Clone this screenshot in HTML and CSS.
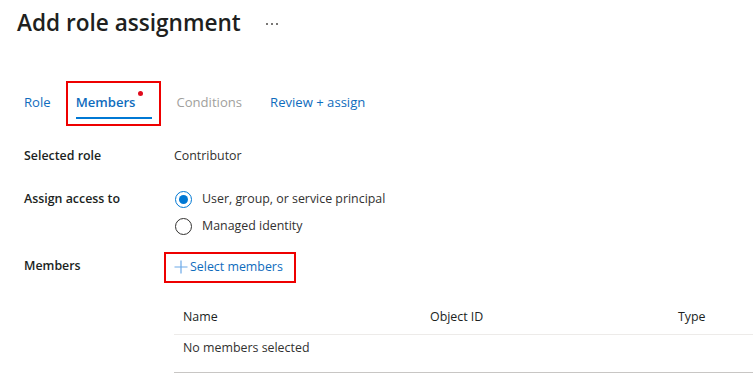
FILE: index.html
```html
<!DOCTYPE html>
<html lang="en">
<head>
  <meta charset="UTF-8">
  <meta name="viewport" content="width=device-width, initial-scale=1.0">
  <title>Add role assignment</title>
  <link rel="stylesheet" href="styles.css">
</head>
<body>
  <div class="page">
    <div class="header">
      <h1>Add role assignment</h1>
      <span class="more"><i></i><i></i><i></i></span>
    </div>

    <div class="tabs">
      <a href="#" class="tab tab-plain tab-role">Role</a>
      <div class="tab-frame">
        <a href="#" class="tab active">Members<span class="dot"></span></a>
      </div>
      <span class="tab tab-plain disabled">Conditions</span>
      <a href="#" class="tab tab-plain">Review + assign</a>
    </div>

    <div class="form">
      <div class="row">
        <div class="label">Selected role</div>
        <div class="value">Contributor</div>
      </div>

      <div class="row row-top">
        <div class="label">Assign access to</div>
        <div class="options">
          <label class="option">
            <span class="radio checked"></span>
            User, group, or service principal
          </label>
          <label class="option">
            <span class="radio"></span>
            Managed identity
          </label>
        </div>
      </div>

      <div class="row row-members">
        <div class="label">Members</div>
        <div class="select-frame">
          <a href="#" class="select-link">
            <svg width="14" height="14" viewBox="0 0 14 14">
              <path d="M7 0.5V13.5M0.5 7H13.5" stroke="#6ca9e8" stroke-width="1.2" fill="none"/>
            </svg>
            Select members
          </a>
        </div>
      </div>
    </div>

    <div class="members-table">
      <div class="table-head">
        <div class="cell">Name</div>
        <div class="cell">Object ID</div>
        <div class="cell">Type</div>
      </div>
      <div class="table-row">
        <div class="cell">No members selected</div>
      </div>
    </div>
  </div>
</body>
</html>
```

FILE: styles.css
```css
html, body {
  margin: 0;
  padding: 0;
  overflow: hidden;
}
body {
  font-family: "Open Sans", "Noto Sans", sans-serif;
  font-size: 12.4px;
  color: #323130;
  background-color: #ffffff;
}
.page {
  padding: 7px 0 0 17px;
}
.header {
  display: flex;
  align-items: center;
  gap: 25px;
}
h1 {
  margin: 0;
  font-size: 22.6px;
  line-height: 32px;
  font-weight: 600;
  color: #201f1e;
}
.more {
  display: flex;
  gap: 3px;
  margin-top: 1px;
}
.more i {
  width: 2px;
  height: 2px;
  background-color: #797775;
}

/* tabs */
.tabs {
  display: flex;
  align-items: flex-start;
  margin: 42px 0 0 7px;
  font-size: 13.1px;
}
.tab {
  display: block;
  line-height: 20px;
  padding-bottom: 5px;
  border-bottom: 2px solid transparent;
  text-decoration: none;
  color: #0f6cbd;
  white-space: nowrap;
}
.tab-plain {
  margin-top: 11px;
}
.tab-role {
  margin-right: 15px;
}
.tab-frame {
  border: 2px solid #ee0000;
  padding: 9px 7px 5px 8px;
  margin-right: 15px;
}
.tab.active {
  position: relative;
  font-weight: 600;
  color: #0f6cbd;
  padding-right: 17px;
  border-bottom-color: #0078d4;
}
.dot {
  position: absolute;
  right: 9px;
  top: -1px;
  width: 5px;
  height: 5px;
  border-radius: 50%;
  background-color: #e00b1c;
}
.tab.disabled {
  color: #a19f9d;
  margin-right: 28px;
}

/* form */
.form {
  padding-left: 7px;
}
.row {
  display: flex;
  align-items: center;
  margin-top: 20px;
}
.row-top {
  align-items: flex-start;
  margin-top: 23px;
}
.row-members {
  margin-top: 16px;
}
.label {
  width: 150px;
  flex: none;
  font-weight: 600;
  line-height: 20px;
  color: #201f1e;
}
.row-members .label {
  margin-top: -3px;
}
.value {
  line-height: 20px;
}
.options {
  display: flex;
  flex-direction: column;
  gap: 7px;
}
.option {
  display: flex;
  align-items: center;
  gap: 10px;
  line-height: 20px;
  margin-left: 1px;
}
.radio {
  width: 15px;
  height: 15px;
  border: 1px solid #323130;
  border-radius: 50%;
  position: relative;
  flex: none;
}
.radio.checked {
  border-color: #0078d4;
}
.radio.checked::after {
  content: "";
  position: absolute;
  left: 3px;
  top: 3px;
  width: 9px;
  height: 9px;
  border-radius: 50%;
  background-color: #0078d4;
}
.select-frame {
  margin-left: -10px;
  border: 2px solid #ee0000;
  padding: 3px 11px 4px 8px;
}
.select-link {
  display: flex;
  align-items: center;
  gap: 2px;
  line-height: 20px;
  color: #0f6cbd;
  text-decoration: none;
}

/* table */
.members-table {
  margin: 18px 0 0 157px;
  width: 640px;
}
.table-head, .table-row {
  display: grid;
  grid-template-columns: 247px 248px 1fr;
}
.table-head {
  border-bottom: 1px solid #edebe9;
  color: #201f1e;
  font-weight: 500;
}
.table-head .cell {
  padding: 6px 9px 7px;
  line-height: 20px;
}
.table-row {
  border-bottom: 1px solid #c8c6c4;
}
.table-row .cell {
  grid-column: 1 / 3;
  padding: 3px 9px 14px;
  line-height: 20px;
}
```
